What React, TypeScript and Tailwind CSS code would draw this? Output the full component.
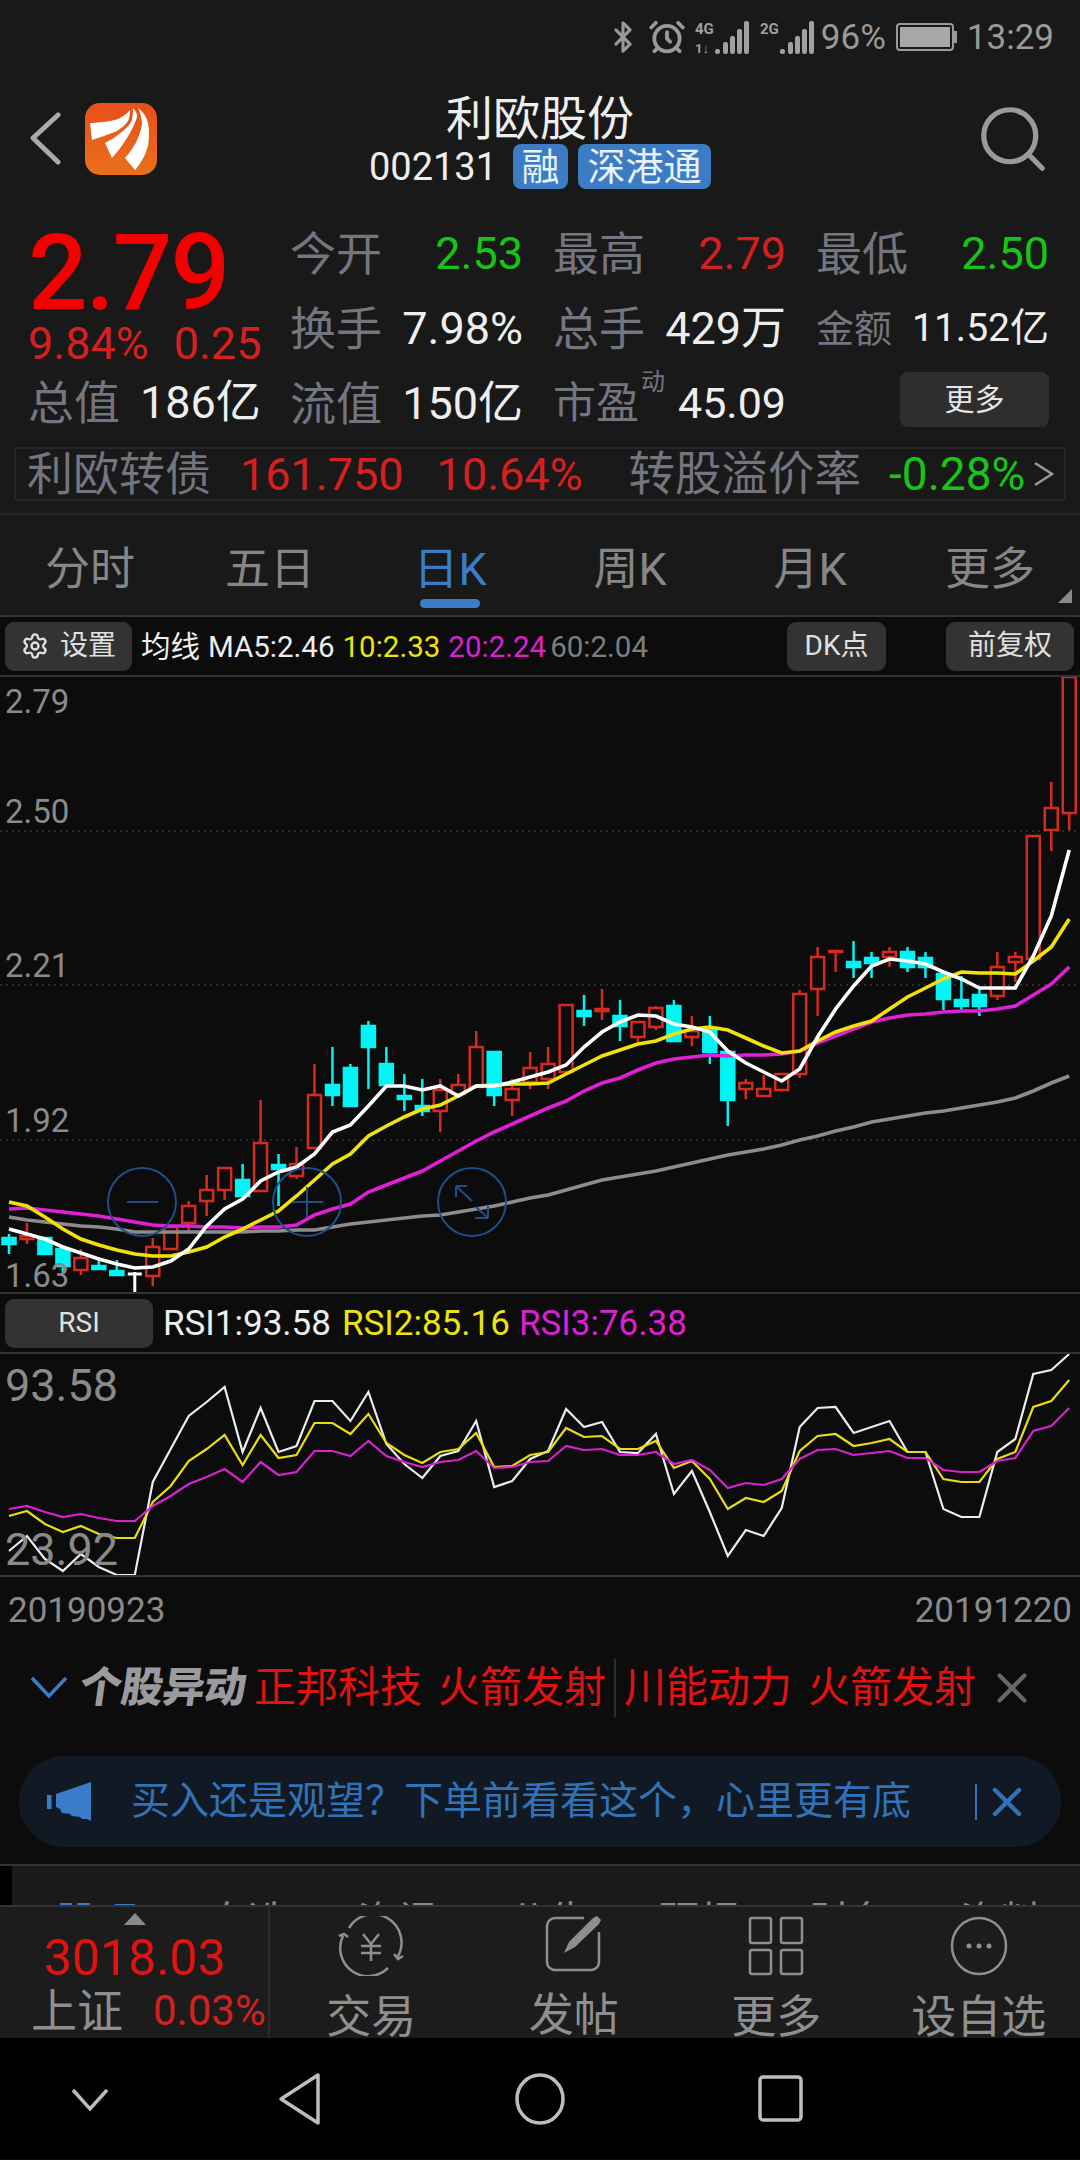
import { AlarmClock, Bluetooth, Search, Settings, X } from "lucide-react";

type Candle = ["r" | "c" | "w", number, number, number, number];

// high, body top, body bottom, low in page pixels
const candles: Candle[] = [
  ["c", 1235, 1239, 1245, 1255], ["r", 1224, 1237, 1240, 1245], ["c", 1239, 1239, 1255, 1255], ["c", 1250, 1250, 1267, 1275],
  ["r", 1250, 1259, 1271, 1276], ["c", 1258, 1267, 1270, 1270], ["c", 1261, 1272, 1276, 1276], ["w", 1273, 1275, 1276, 1293],
  ["r", 1239, 1248, 1277, 1287], ["r", 1227, 1228, 1250, 1250], ["r", 1202, 1207, 1224, 1233], ["r", 1176, 1191, 1202, 1217],
  ["r", 1169, 1169, 1191, 1201], ["c", 1165, 1181, 1197, 1197], ["r", 1101, 1144, 1192, 1192], ["c", 1155, 1166, 1170, 1207],
  ["r", 1148, 1165, 1177, 1180], ["r", 1065, 1096, 1149, 1149], ["c", 1048, 1086, 1096, 1107], ["c", 1065, 1069, 1107, 1107],
  ["c", 1022, 1027, 1048, 1090], ["c", 1048, 1065, 1086, 1086], ["c", 1075, 1097, 1100, 1112], ["c", 1080, 1107, 1112, 1117],
  ["r", 1080, 1091, 1112, 1133], ["r", 1075, 1086, 1095, 1095], ["r", 1032, 1048, 1088, 1088], ["c", 1053, 1053, 1096, 1107],
  ["r", 1080, 1090, 1101, 1117], ["r", 1053, 1069, 1083, 1090], ["r", 1048, 1065, 1080, 1090], ["r", 1006, 1006, 1073, 1073],
  ["c", 996, 1012, 1017, 1027], ["r", 990, 1010, 1012, 1021], ["c", 1001, 1017, 1027, 1042], ["r", 1023, 1023, 1038, 1043],
  ["r", 1007, 1009, 1028, 1031], ["c", 1001, 1007, 1042, 1042], ["r", 1017, 1032, 1038, 1047], ["c", 1017, 1030, 1053, 1065],
  ["c", 1053, 1053, 1101, 1127], ["r", 1080, 1084, 1090, 1100], ["r", 1076, 1090, 1097, 1097], ["r", 1075, 1075, 1091, 1091],
  ["r", 991, 995, 1075, 1079], ["r", 948, 958, 990, 1017], ["r", 952, 952, 953, 973], ["c", 942, 963, 968, 979],
  ["c", 953, 959, 964, 979], ["r", 948, 953, 958, 968], ["c", 948, 953, 968, 973], ["c", 953, 959, 968, 979],
  ["c", 975, 975, 1000, 1011], ["c", 977, 1001, 1007, 1011], ["c", 990, 996, 1007, 1017], ["r", 953, 968, 997, 1001],
  ["r", 953, 958, 963, 983], ["r", 837, 837, 960, 960], ["r", 783, 809, 831, 852], ["r", 678, 678, 814, 831],
];

const ma5 = [1230, 1235, 1240, 1248, 1254, 1260, 1265, 1269, 1268, 1262, 1250, 1227, 1210, 1200, 1182, 1173, 1168, 1155, 1133, 1126, 1107, 1087, 1087, 1091, 1087, 1097, 1087, 1087, 1083, 1078, 1073, 1066, 1048, 1033, 1023, 1016, 1017, 1025, 1028, 1033, 1052, 1064, 1073, 1082, 1070, 1038, 1010, 987, 967, 960, 962, 965, 973, 980, 989, 989, 989, 957, 917, 851];
const ma10 = [1203, 1207, 1218, 1230, 1240, 1246, 1251, 1255, 1257, 1257, 1253, 1248, 1238, 1230, 1221, 1212, 1197, 1181, 1165, 1155, 1137, 1127, 1118, 1110, 1106, 1097, 1087, 1086, 1085, 1085, 1084, 1075, 1066, 1057, 1051, 1045, 1042, 1035, 1030, 1028, 1031, 1039, 1047, 1054, 1052, 1042, 1033, 1027, 1022, 1010, 998, 989, 980, 973, 974, 974, 975, 962, 948, 920];
const ma20 = [1210, 1209, 1211, 1213, 1215, 1217, 1220, 1223, 1226, 1227, 1227, 1228, 1228, 1229, 1228, 1228, 1226, 1216, 1210, 1205, 1193, 1186, 1179, 1172, 1162, 1152, 1142, 1133, 1125, 1117, 1109, 1102, 1092, 1084, 1079, 1071, 1064, 1060, 1058, 1056, 1057, 1056, 1056, 1055, 1052, 1044, 1037, 1030, 1023, 1019, 1016, 1015, 1013, 1012, 1012, 1010, 1007, 996, 985, 968];
const ma60 = [1218, 1221, 1223, 1225, 1227, 1228, 1230, 1233, 1233, 1233, 1233, 1233, 1233, 1233, 1232, 1232, 1231, 1231, 1228, 1225, 1223, 1221, 1219, 1217, 1216, 1213, 1210, 1207, 1203, 1199, 1196, 1191, 1186, 1181, 1178, 1175, 1172, 1168, 1164, 1160, 1156, 1153, 1150, 1146, 1141, 1137, 1132, 1128, 1123, 1120, 1117, 1114, 1112, 1109, 1106, 1103, 1099, 1092, 1084, 1077];

const rsi1 = [1552, 1537, 1560, 1572, 1555, 1568, 1576, 1576, 1483, 1450, 1417, 1403, 1388, 1453, 1409, 1453, 1447, 1402, 1402, 1422, 1393, 1445, 1465, 1479, 1457, 1452, 1422, 1488, 1482, 1460, 1452, 1410, 1428, 1423, 1453, 1454, 1435, 1495, 1472, 1513, 1557, 1531, 1537, 1509, 1428, 1409, 1408, 1434, 1428, 1422, 1453, 1453, 1510, 1518, 1518, 1453, 1440, 1375, 1371, 1355];
const rsi2 = [1517, 1512, 1525, 1533, 1527, 1535, 1539, 1539, 1503, 1487, 1462, 1450, 1436, 1466, 1436, 1459, 1456, 1424, 1424, 1435, 1415, 1444, 1456, 1464, 1453, 1450, 1434, 1468, 1467, 1456, 1453, 1429, 1438, 1437, 1450, 1450, 1442, 1469, 1462, 1480, 1510, 1499, 1503, 1492, 1452, 1437, 1435, 1447, 1444, 1440, 1453, 1453, 1480, 1483, 1483, 1460, 1453, 1408, 1402, 1381];
const rsi3 = [1510, 1507, 1513, 1518, 1515, 1519, 1522, 1522, 1507, 1497, 1485, 1478, 1470, 1483, 1463, 1476, 1473, 1452, 1452, 1457, 1442, 1457, 1463, 1468, 1463, 1461, 1452, 1469, 1468, 1463, 1462, 1447, 1451, 1450, 1456, 1456, 1453, 1465, 1461, 1471, 1489, 1484, 1486, 1480, 1460, 1451, 1450, 1456, 1454, 1452, 1459, 1459, 1471, 1473, 1473, 1462, 1459, 1432, 1427, 1409];

const xAt = (i: number) => 9 + 17.97 * i;
const toPoints = (ys: number[]) => ys.map((y, i) => `${xAt(i).toFixed(1)},${y}`).join(" ");

const CANDLE_RED = "#d62a1e";
const CANDLE_CYAN = "#00f5f5";

function CandleMark({ c, i }: { c: Candle; i: number }) {
  const [kind, high, top, bottom, low] = c;
  const x = xAt(i);
  if (kind === "w") {
    return (
      <g stroke="#fff" strokeWidth={3}>
        <line x1={x} x2={x} y1={high} y2={low} />
        <line x1={x - 7} x2={x + 7} y1={top} y2={top} />
      </g>
    );
  }
  const color = kind === "r" ? CANDLE_RED : CANDLE_CYAN;
  return (
    <g stroke={color} strokeWidth={2.5}>
      <line x1={x} x2={x} y1={high} y2={top} />
      <line x1={x} x2={x} y1={bottom} y2={low} />
      <rect
        x={x - 6.5}
        y={top}
        width={13}
        height={Math.max(bottom - top, 1)}
        fill={kind === "r" ? "#0c0c0c" : color}
      />
    </g>
  );
}

function KChart() {
  return (
    <div className="relative h-[615px] w-full">
      <svg viewBox="0 678 1080 615" className="block h-full w-full">
        {[832, 986, 1141].map((y) => (
          <line key={y} x1={0} x2={1080} y1={y} y2={y} stroke="#3a3a3a" strokeWidth={1.5} strokeDasharray="2 4" />
        ))}
        {candles.map((c, i) => (
          <CandleMark key={i} c={c} i={i} />
        ))}
        <polyline points={toPoints(ma60)} fill="none" stroke="#8c8c8c" strokeWidth={3.6} />
        <polyline points={toPoints(ma20)} fill="none" stroke="#e01fd6" strokeWidth={3.6} />
        <polyline points={toPoints(ma10)} fill="none" stroke="#f2e20c" strokeWidth={3.6} />
        <polyline points={toPoints(ma5)} fill="none" stroke="#fff" strokeWidth={3.6} />
        <g fill="none" stroke="#1f4f85" strokeWidth={2}>
          <circle cx={142} cy={1203} r={34} />
          <circle cx={307} cy={1203} r={34} />
          <circle cx={472} cy={1203} r={34} />
          <path d="M127 1203h31M292 1203h31M307 1188v31" />
          <path d="M456 1187l16 15M456 1187h11M456 1187v11M488 1219l-12-11M488 1219h-13M488 1219v-12" />
        </g>
      </svg>
      <span className="absolute left-[5px] top-[6px] text-[33px] leading-[38px] text-[#8a8a8a]">2.79</span>
      <span className="absolute left-[5px] top-[116px] text-[33px] leading-[38px] text-[#8a8a8a]">2.50</span>
      <span className="absolute left-[5px] top-[270px] text-[33px] leading-[38px] text-[#8a8a8a]">2.21</span>
      <span className="absolute left-[5px] top-[425px] text-[33px] leading-[38px] text-[#8a8a8a]">1.92</span>
      <span className="absolute left-[5px] top-[580px] text-[33px] leading-[38px] text-[#8a8a8a]">1.63</span>
    </div>
  );
}

function RsiChart() {
  return (
    <div className="relative h-[221px] w-full">
      <svg viewBox="0 1355 1080 221" className="block h-full w-full">
        <polyline points={toPoints(rsi1)} fill="none" stroke="#ececec" strokeWidth={2.2} />
        <polyline points={toPoints(rsi2)} fill="none" stroke="#e8dc14" strokeWidth={2.2} />
        <polyline points={toPoints(rsi3)} fill="none" stroke="#d822cf" strokeWidth={2.2} />
      </svg>
      <span className="absolute left-[5px] top-[6px] text-[45px] leading-[52px] text-[#8a8a8a]">93.58</span>
      <span className="absolute left-[5px] top-[170px] text-[45px] leading-[52px] text-[#8a8a8a]">23.92</span>
    </div>
  );
}

function SignalBars({ label, sub }: { label: string; sub?: string }) {
  return (
    <svg width="54" height="36" viewBox="0 0 54 36" className="block" fill="#a0a0a0">
      <text x="0" y="15" fontSize="15" fontWeight="700" fontFamily="Roboto">{label}</text>
      {sub && <text x="0" y="34" fontSize="13" fontWeight="700" fontFamily="Roboto">{sub}</text>}
      <rect x="20" y="30" width="5" height="5" rx="2" />
      <rect x="28" y="23" width="5" height="12" rx="2" />
      <rect x="35" y="17" width="5" height="18" rx="2" />
      <rect x="42" y="10" width="5" height="25" rx="2" />
      <rect x="49" y="2" width="5" height="33" rx="2" />
    </svg>
  );
}

function StatusBar() {
  return (
    <div className="flex h-[72px] items-center justify-end pr-[26px] pt-[2px] text-[#9a9a9a]">
      <Bluetooth size={34} strokeWidth={2.2} className="mr-[8px]" />
      <AlarmClock size={38} strokeWidth={2.4} className="mr-[9px]" />
      <SignalBars label="4G" sub="1↓" />
      <div className="w-[11px]" />
      <SignalBars label="2G" />
      <span className="ml-[7px] text-[35px] leading-none">96%</span>
      <div className="ml-[10px] flex h-[28px] w-[58px] items-center rounded-[4px] border-2 border-[#9a9a9a] p-[2px]">
        <div className="h-full w-full bg-[#a8a8a8]" />
      </div>
      <div className="h-[12px] w-[3px] bg-[#9a9a9a]" />
      <span className="ml-[10px] text-[35px] leading-none">13:29</span>
    </div>
  );
}

function Logo() {
  return (
    <svg width="72" height="72" viewBox="0 0 72 72" className="block">
      <defs>
        <linearGradient id="logoBg" x1="0" y1="0" x2="0" y2="1">
          <stop offset="0" stopColor="#e74f18" />
          <stop offset="1" stopColor="#ea701c" />
        </linearGradient>
      </defs>
      <rect width="72" height="72" rx="15" fill="url(#logoBg)" />
      <path d="M5 20Q28 19 35 15T45 7Q45 14 43 18T32 28Q20 33 7 37Z" fill="#fff" />
      <path d="M48 5Q52 9 52 13T45 30Q37 44 27 55L20 40Q30 35 38 28T47 17Q48 10 48 5Z" fill="#fff" />
      <path d="M53 5Q61 11 63 20T63 43Q59 57 50 67L40 55Q49 45 53 35T57 20Q56 11 53 5Z" fill="#fff" />
    </svg>
  );
}

function Header() {
  return (
    <div className="grid h-[128px] grid-cols-[1fr_auto_1fr] items-center">
      <div className="flex items-center pl-[30px] pt-[6px]">
        <svg width="32" height="54" viewBox="0 0 32 54" fill="none" stroke="#aaaaaa" strokeWidth="5" strokeLinecap="round" strokeLinejoin="round">
          <path d="M28 3 3 26l25 24" />
        </svg>
        <div className="ml-[23px]"><Logo /></div>
      </div>
      <div className="flex flex-col items-center pt-[11px]">
        <div className="text-[47px] leading-[50px] text-[#eeeeee]">利欧股份</div>
        <div className="flex items-center">
          <span className="mr-[16px] text-[38px] leading-none text-[#eeeeee]">002131</span>
          <span className="flex h-[45px] w-[55px] items-center justify-center rounded-[8px] bg-[#3b7cc4] text-[38px] leading-none text-[#e8f0fa]">融</span>
          <span className="ml-[10px] flex h-[45px] w-[133px] items-center justify-center rounded-[8px] bg-[#3b7cc4] text-[38px] leading-none text-[#e8f0fa]">深港通</span>
        </div>
      </div>
      <div className="flex justify-end pr-[28px] pt-[6px]">
        <Search size={78} strokeWidth={1.6} className="text-[#9a9a9a]" />
      </div>
    </div>
  );
}

const LABEL = "text-[46px] leading-none text-[#757580]";
const VALUE = "text-[45px] leading-none";

function Cell({ label, value, color }: { label: string; value: string; color: string }) {
  return (
    <div className="flex h-[75px] items-center justify-between">
      <span className={LABEL}>{label}</span>
      <span className={`${VALUE} ${color}`}>{value}</span>
    </div>
  );
}

function Quote() {
  return (
    <div className="flex h-[247px] pt-[16px]">
      <div className="w-[290px] pl-[28px]">
        <div className="flex h-[114px] items-center">
          <span className="text-[105px] font-medium leading-none tracking-[-2px] text-[#f40000]">2.79</span>
        </div>
        <div className="flex h-[26px] items-center text-[45px] leading-none text-[#d62020]">
          <span>9.84%</span>
          <span className="ml-[25px]">0.25</span>
        </div>
        <div className="mt-[9px] flex h-[75px] items-center">
          <span className={LABEL}>总值</span>
          <span className={`${VALUE} ml-[20px] text-[#eeeeee]`}>186亿</span>
        </div>
      </div>
      <div className="grid grid-cols-[233px_233px_233px] grid-rows-[75px_75px_75px] gap-x-[30px]">
        <Cell label="今开" value="2.53" color="text-[#16c516]" />
        <Cell label="最高" value="2.79" color="text-[#d62020]" />
        <Cell label="最低" value="2.50" color="text-[#16c516]" />
        <Cell label="换手" value="7.98%" color="text-[#eeeeee]" />
        <Cell label="总手" value="429万" color="text-[#eeeeee]" />
        <div className="flex h-[75px] items-center justify-between">
          <span className="text-[38px] leading-none text-[#757580]">金额</span>
          <span className="text-[39px] leading-none text-[#eeeeee]">11.52亿</span>
        </div>
        <Cell label="流值" value="150亿" color="text-[#eeeeee]" />
        <div className="flex h-[75px] items-center justify-between">
          <span className="relative">
            <span className="text-[43px] leading-none text-[#757580]">市盈</span>
            <span className="absolute -right-[26px] -top-[12px] text-[24px] leading-none text-[#757580]">动</span>
          </span>
          <span className="text-[43px] leading-none text-[#eeeeee]">45.09</span>
        </div>
        <div className="flex h-[75px] items-center justify-end">
          <button className="mb-[8px] flex h-[55px] w-[149px] items-center justify-center rounded-[8px] bg-[#2e2e2e] text-[30px] text-[#e6e6e6]">更多</button>
        </div>
      </div>
    </div>
  );
}

function BondBar() {
  return (
    <div className="mx-[14px] flex h-[54px] items-center rounded-[3px] border-2 border-[#262626] pl-[11px] whitespace-nowrap">
      <span className="text-[46px] leading-none text-[#757580]">利欧转债</span>
      <span className="ml-[29px] text-[45px] leading-none text-[#d62020]">161.750</span>
      <span className="ml-[33px] text-[45px] leading-none text-[#d62020]">10.64%</span>
      <span className="ml-[46px] text-[46.500px] leading-none text-[#757580]">转股溢价率</span>
      <span className="ml-[28px] text-[46px] leading-none text-[#16c516]">-0.28%</span>
      <svg width="22" height="28" viewBox="0 0 22 28" className="ml-[8px] shrink-0">
        <path d="M2 3l17 11L2 25" fill="none" stroke="#9a9a9a" strokeWidth="2.5" />
      </svg>
    </div>
  );
}

function Tabs() {
  const tabs = ["分时", "五日", "日K", "周K", "月K", "更多"];
  return (
    <div className="relative grid h-[104px] grid-cols-6 border-t-2 border-b-2 border-t-[#252525] border-b-[#333333]">
      {tabs.map((t) => (
        <div key={t} className="relative flex items-start justify-center pt-[31px]">
          <span className={`text-[45px] leading-[48px] ${t === "日K" ? "text-[#3a7cc8]" : "text-[#868686]"}`}>{t}</span>
          {t === "日K" && <div className="absolute bottom-[7px] left-1/2 h-[9px] w-[60px] -translate-x-1/2 rounded-full bg-[#3a7cc8]" />}
        </div>
      ))}
      <div className="absolute bottom-[12px] right-[8px] h-0 w-0 border-b-[14px] border-l-[14px] border-b-[#8a8a8a] border-l-transparent" />
    </div>
  );
}

function ChipButton({ className, children }: { className: string; children: React.ReactNode }) {
  return (
    <div className={`flex h-[49px] shrink-0 items-center justify-center rounded-[9px] bg-[#333333] text-[28px] leading-none text-[#e0e0e0] ${className}`}>
      {children}
    </div>
  );
}

function Legend() {
  return (
    <div className="flex h-[60px] items-center whitespace-nowrap border-b-2 border-[#333333] pl-[5px] text-[29.500px] leading-none">
      <ChipButton className="w-[127px]">
        <Settings size={28} strokeWidth={2} className="mr-[11px]" />
        设置
      </ChipButton>
      <span className="ml-[9px] mt-[3px] text-[#eeeeee]">均线</span>
      <span className="ml-[8px] mt-[3px] text-[#eeeeee]">MA5:2.46</span>
      <span className="ml-[8px] mt-[3px] text-[#ece30f]">10:2.33</span>
      <span className="ml-[8px] mt-[3px] text-[#dd20d4]">20:2.24</span>
      <span className="ml-[4px] mt-[3px] text-[#7e7e7e]">60:2.04</span>
      <ChipButton className="ml-[139px] w-[99px]">DK点</ChipButton>
      <ChipButton className="ml-[60px] w-[128px]">前复权</ChipButton>
    </div>
  );
}

function RsiLegend() {
  return (
    <div className="flex h-[62px] items-center whitespace-nowrap border-y-2 border-[#333333] pl-[5px] text-[35px] leading-none">
      <ChipButton className="w-[148px]">RSI</ChipButton>
      <span className="ml-[10px] text-[#eeeeee]">RSI1:93.58</span>
      <span className="ml-[11px] text-[#ece30f]">RSI2:85.16</span>
      <span className="ml-[9px] text-[#dd20d4]">RSI3:76.38</span>
    </div>
  );
}

function AlertRow() {
  return (
    <div className="flex h-[78px] items-center whitespace-nowrap pl-[30px] text-[42px] leading-none text-[#e01212]">
      <svg width="38" height="24" viewBox="0 0 38 24" fill="none" stroke="#3a7cc8" strokeWidth="3.5" className="shrink-0">
        <path d="M2 2l17 18L36 2" />
      </svg>
      <span className="ml-[12px] inline-block -skew-x-[8deg] text-[42px] font-black tracking-[-0.5px] text-[#9b9b9f]">个股异动</span>
      <span className="ml-[8px]">正邦科技</span>
      <span className="ml-[16px]">火箭发射</span>
      <div className="mx-[8px] h-[58px] w-[2px] bg-[#2c2c2c]" />
      <span>川能动力</span>
      <span className="ml-[16px]">火箭发射</span>
      <X size={50} strokeWidth={2} className="ml-[11px] shrink-0 text-[#666666]" />
    </div>
  );
}

function Banner() {
  return (
    <div className="mx-[19px] mt-[29px] flex h-[91px] items-center rounded-[46px] bg-[#111a24] pl-[28px] text-[#3272b8]">
      <svg width="45" height="39" viewBox="0 0 45 39" className="block shrink-0" fill="#3a7cc8">
        <path d="M0 13h4.500v14H0z" />
        <path d="M9 12 44 0V39L40 37H35L33 35 25 34 23 32 15 31 13 27 9 25Z" />
      </svg>
      <span className="ml-[39px] whitespace-nowrap text-[39px] leading-none">买入还是观望？下单前看看这个，心里更有底</span>
      <div className="ml-[64px] h-[36px] w-[2px] bg-[#3272b8]" />
      <X size={48} strokeWidth={2.2} className="ml-[6px] shrink-0" />
    </div>
  );
}

function CutTabs() {
  const items = ["股吧", "自选", "资讯", "公告", "研报", "财务", "资料"];
  return (
    <div className="mt-[17px] h-[41px] overflow-hidden border-t-2 border-[#333333] bg-black pl-[12px]">
      <div className="flex h-full justify-between bg-[#1a1a1a] pl-[44px] pr-[38px] pt-[36px] text-[41px] leading-none text-[#8a8a8a]">
        {items.map((t, i) => (
          <span key={t} className={i === 0 ? "text-[#3a7cc8]" : ""}>{t}</span>
        ))}
      </div>
    </div>
  );
}

function BottomAction({ label, children }: { label: string; children: React.ReactNode }) {
  return (
    <div className="flex flex-1 flex-col items-center">
      <div className="mt-[9px] flex h-[60px] items-center justify-center">{children}</div>
      <span className="mt-[19px] whitespace-nowrap text-[45px] leading-none text-[#8f8f8f]">{label}</span>
    </div>
  );
}

function BottomBar() {
  return (
    <div className="flex h-[133px] border-t-2 border-[#333333] bg-[#1c1c1c]">
      <div className="relative w-[270px] shrink-0 border-r-2 border-[#2c2c2c] pl-[31px]">
        <div className="absolute left-[124px] top-[6px] h-0 w-0 border-x-[11px] border-b-[12px] border-x-transparent border-b-[#8a8a8a]" />
        <div className="mt-[25px] pl-[13px] text-[50px] leading-[52px] text-[#e01212]">3018.03</div>
        <div className="mt-[2px] flex items-center whitespace-nowrap">
          <span className="shrink-0 text-[46px] leading-[50px] text-[#8f8f8f]">上证</span>
          <span className="ml-[30px] shrink-0 text-[42px] leading-none text-[#d62020]">0.03%</span>
        </div>
      </div>
      <div className="flex flex-1">
        <BottomAction label="交易">
          <svg width="66" height="60" viewBox="0 0 66 60" fill="none" stroke="#8f8f8f" strokeWidth="2.5">
            <path d="M11 12A28 28 0 0 1 59.500 41M56 38l4 5 5-3" />
            <path d="M50 52A28 28 0 0 1 5 20M1 20l5-2 4 3" />
            <path d="M25 18l8 10 8-10M33 28v17M23 30h20M23 37h20" />
          </svg>
        </BottomAction>
        <BottomAction label="发帖">
          <svg width="58" height="58" viewBox="0 0 58 58" fill="none" stroke="#8f8f8f" strokeWidth="2.5">
            <path d="M39 2H10a8 8 0 0 0-8 8V46a8 8 0 0 0 8 8H46a8 8 0 0 0 8-8V16" />
            <path d="M19 37 24 26 48 2 52 0 56 4 54 8 30 31Z" fill="#8f8f8f" stroke="none" />
          </svg>
        </BottomAction>
        <BottomAction label="更多">
          <svg width="56" height="60" viewBox="0 0 56 60" fill="none" stroke="#8f8f8f" strokeWidth="2.5">
            <rect x="2" y="2" width="21" height="25" rx="2" />
            <rect x="33" y="2" width="21" height="25" rx="2" />
            <rect x="2" y="34" width="21" height="24" rx="2" />
            <rect x="33" y="34" width="21" height="24" rx="2" />
          </svg>
        </BottomAction>
        <BottomAction label="设自选">
          <svg width="58" height="60" viewBox="0 0 58 60" fill="none" stroke="#8f8f8f" strokeWidth="2.5">
            <ellipse cx="29" cy="30" rx="27" ry="28" />
            <circle cx="19" cy="30" r="2.5" fill="#8f8f8f" stroke="none" />
            <circle cx="29" cy="30" r="2.5" fill="#8f8f8f" stroke="none" />
            <circle cx="39" cy="30" r="2.5" fill="#8f8f8f" stroke="none" />
          </svg>
        </BottomAction>
      </div>
    </div>
  );
}

function NavBar() {
  return (
    <div className="relative flex h-[121px] bg-black">
      <svg viewBox="0 2039 1080 121" className="block h-full w-full" fill="none" stroke="#bdbdbd" strokeWidth="3.5">
        <path d="M73 2091l17 19 17-19" />
        <path d="M318 2076v48l-37-24z" strokeLinejoin="round" />
        <ellipse cx="540" cy="2100" rx="23" ry="24" />
        <rect x="760" y="2078" width="41" height="43" rx="3" />
      </svg>
    </div>
  );
}

export default function App() {
  return (
    <div className="flex h-[2160px] w-[1080px] flex-col overflow-hidden bg-[#0c0c0c] font-[Roboto,'Noto_Sans_CJK_SC',sans-serif]">
      <div className="h-[513px] bg-[#191919]">
        <StatusBar />
        <Header />
        <Quote />
        <BondBar />
      </div>
      <div className="bg-[#191919]">
        <Tabs />
      </div>
      <Legend />
      <KChart />
      <RsiLegend />
      <RsiChart />
      <div className="flex h-[74px] items-start justify-between border-t-2 border-[#333333] px-[8px] pt-[15px] text-[35px] leading-[38px] text-[#8a8a8a]">
        <span>20190923</span>
        <span>20191220</span>
      </div>
      <AlertRow />
      <Banner />
      <CutTabs />
      <BottomBar />
      <NavBar />
    </div>
  );
}
